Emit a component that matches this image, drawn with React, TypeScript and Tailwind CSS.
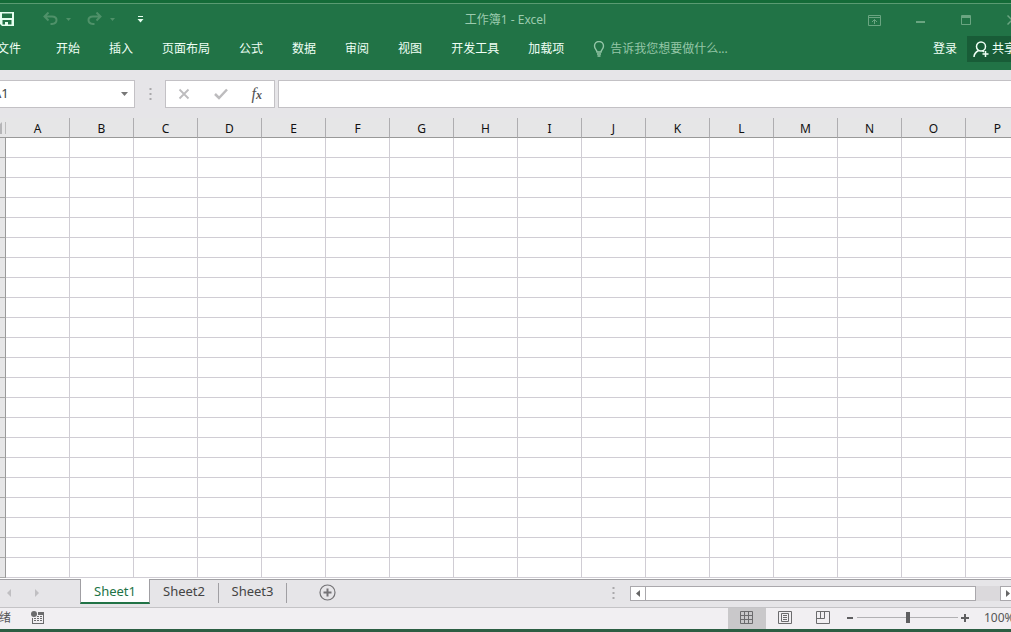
import { useState, type ReactNode } from "react";

const menus = ["开始", "插入", "页面布局", "公式", "数据", "审阅", "视图", "开发工具", "加载项"];
const columns = "ABCDEFGHIJKLMNOP".split("");
const rows = Array.from({ length: 22 }, (_, i) => i + 1);
const sheets = ["Sheet1", "Sheet2", "Sheet3"];

function WindowButton({ label, children }: { label: string; children: ReactNode }) {
  return (
    <button aria-label={label} className="flex h-8 w-[46px] items-center justify-center text-[#6aa581]">
      {children}
    </button>
  );
}

function Grip() {
  return (
    <svg width="3" height="12" viewBox="0 0 3 12" fill="#aaa9ab" aria-hidden="true" className="shrink-0">
      <path d="M0.5 0h2v2h-2zM0.5 5h2v2h-2zM0.5 10h2v2h-2z" />
    </svg>
  );
}

function TitleBar() {
  return (
    <div className="grid h-8 grid-cols-[1fr_auto_1fr] items-center">
      <div className="flex items-center pb-[2px] pl-6">
        <button aria-label="保存" className="w-[15px] text-[#e6fff0]">
          <svg width="15" height="14" viewBox="0 0 15 14" fill="currentColor">
            <path fillRule="evenodd" d="M0 0h14v14H2l-2-2zM2 1.500v4.500h10V1.500zM2.500 8v4.500h2.500V10h3v2.500h3.500V8z" />
          </svg>
        </button>
        <button aria-label="撤消" className="ml-7 text-[#4f9169]">
          <svg width="15" height="14" viewBox="0 0 15 14" fill="none" stroke="currentColor" strokeWidth="2">
            <path d="M5.500 0.500L1.500 4.500l4 4M2 4.500h7c6 0 6 7 0 7.500H7.500" />
          </svg>
        </button>
        <button aria-label="撤消列表" className="ml-2 text-[#4f9169]">
          <svg width="5" height="3" viewBox="0 0 5 3" fill="currentColor"><path d="M0 0h5L2.500 3z" /></svg>
        </button>
        <button aria-label="恢复" className="ml-4 text-[#4f9169]">
          <svg width="15" height="14" viewBox="0 0 15 14" fill="none" stroke="currentColor" strokeWidth="2">
            <path d="M9.500 0.500l4 4-4 4M13 4.500H6C0 4.500 0 11.500 6 12h1.500" />
          </svg>
        </button>
        <button aria-label="恢复列表" className="ml-2 text-[#4f9169]">
          <svg width="5" height="3" viewBox="0 0 5 3" fill="currentColor"><path d="M0 0h5L2.500 3z" /></svg>
        </button>
        <button aria-label="自定义快速访问工具栏" className="ml-[22px] text-[#e6fff0]">
          <svg width="7" height="7" viewBox="0 0 7 7" fill="currentColor">
            <path d="M1 0h5v1H1zM0.500 3h6L3.500 6.500z" />
          </svg>
        </button>
      </div>
      <h1 className="text-xs text-[#9bcbae]">工作簿1 - Excel</h1>
      <div className="flex justify-end">
        <WindowButton label="功能区显示选项">
          <svg width="13" height="11" viewBox="0 0 13 11" fill="none" stroke="currentColor">
            <path d="M0.500 0.500h12v10H0.500zM0.500 2.500h12M6.500 9V4.500M4 7l2.500-2.500L9 7" />
          </svg>
        </WindowButton>
        <WindowButton label="最小化">
          <svg width="9" height="6" viewBox="0 0 9 6" fill="currentColor"><path d="M0 4h9v2H0z" /></svg>
        </WindowButton>
        <WindowButton label="最大化">
          <svg width="10" height="10" viewBox="0 0 10 10" fill="none" stroke="currentColor">
            <path d="M0.500 0.500h9v9h-9zM0 1.500h10M0 2.500h10" />
          </svg>
        </WindowButton>
        <WindowButton label="关闭">
          <svg width="10" height="10" viewBox="0 0 10 10" fill="none" stroke="currentColor" strokeWidth="1.500">
            <path d="M0.500 0.500l9 9M9.500 0.500l-9 9" />
          </svg>
        </WindowButton>
      </div>
    </div>
  );
}

function MenuBar() {
  return (
    <nav className="flex h-[26px] items-center text-xs whitespace-nowrap text-[#effff5]">
      <button className="mr-[35px] ml-[21px]">文件</button>
      <div className="flex gap-[29px]">
        {menus.map((m) => (
          <button key={m}>{m}</button>
        ))}
        <label className="flex items-center text-[#94c6a7]">
          <svg width="12" height="16" viewBox="0 0 12 16" fill="none" stroke="currentColor" strokeWidth="1.400" className="mr-[5px]">
            <path d="M4 11C4 9 1.500 8 1.500 5a4.500 4.500 0 0 1 9 0c0 3-2.500 4-2.500 6zM4 13h4M4.500 15h3" />
          </svg>
          <input
            aria-label="操作说明搜索"
            placeholder="告诉我您想要做什么..."
            className="w-40 bg-transparent outline-none placeholder:text-[#94c6a7]"
          />
        </label>
      </div>
      <button className="ml-auto">登录</button>
      <button className="ml-[10px] flex h-[26px] w-[68px] items-center bg-[#185c37] pl-[6px]">
        <svg width="17" height="17" viewBox="0 0 17 17" fill="none" stroke="currentColor" strokeWidth="1.500" className="mr-[2px] shrink-0">
          <circle cx="8" cy="5.500" r="4.500" />
          <path d="M1 16c0-3.500 2-5 4.500-6.500M9.500 9.800l1.500 1M12.500 10v6M9.500 13h6" />
        </svg>
        共享
      </button>
    </nav>
  );
}

function FormulaBar() {
  return (
    <div className="flex h-[38px] items-start bg-[#e6e5e8] text-xs text-[#444]">
      <div className="flex h-7 w-[159px] shrink-0 items-center border border-[#c3c1c5] bg-white">
        <input aria-label="名称框" defaultValue="A1" className="w-full min-w-0 bg-transparent pl-4 text-[13px] outline-none" />
        <button aria-label="名称列表" className="mr-[5px] shrink-0 text-[#777]">
          <svg width="9" height="5" viewBox="0 0 9 5" fill="currentColor"><path d="M1 0h7L4.500 4z" /></svg>
        </button>
      </div>
      <div className="flex h-7 w-[30px] shrink-0 items-center justify-center">
        <Grip />
      </div>
      <div className="flex h-7 w-[110px] shrink-0 items-center justify-around border border-[#c3c1c5] bg-white">
        <button aria-label="取消">
          <svg width="12" height="12" viewBox="0 0 12 12" fill="none" stroke="#bdbcbe" strokeWidth="1.800"><path d="M1.500 1.500l9 9M10.500 1.500l-9 9" /></svg>
        </button>
        <button aria-label="输入">
          <svg width="14" height="12" viewBox="0 0 14 12" fill="none" stroke="#bdbcbe" strokeWidth="2.500"><path d="M1 6l4 4L13 1.500" /></svg>
        </button>
        <button aria-label="插入函数" className="flex items-baseline font-['Liberation_Serif',serif] text-base leading-5 text-[#555] italic">
          f<span className="text-xs font-bold">x</span>
        </button>
      </div>
      <input aria-label="编辑栏" className="ml-[3px] h-7 min-w-0 flex-1 border border-[#c3c1c5] bg-white px-2 outline-none" />
    </div>
  );
}

function Grid() {
  return (
    <main className="flex-1 overflow-hidden bg-white pb-px">
      <table className="w-max table-fixed border-separate border-spacing-0 font-['Noto_Sans',sans-serif] text-xs leading-4">
        <thead>
          <tr className="bg-[#e6e6e7]">
            <th className="h-5 w-[30px] border-b border-[#999] p-0">
              <button aria-label="全选" className="flex w-full justify-end border-r border-[#bbb] pr-[3px]">
                <svg width="12" height="12" viewBox="0 0 12 12" fill="#b5b5b7"><path d="M12 0v12H0z" /></svg>
              </button>
            </th>
            {columns.map((c) => (
              <th key={c} className="h-5 w-16 border-r border-b border-r-[#aeadb0] border-b-[#999] p-0 font-normal text-[#111]">
                <div className="w-[63px] pt-[3px]">{c}</div>
              </th>
            ))}
          </tr>
        </thead>
        <tbody>
          {rows.map((r) => (
            <tr key={r}>
              <th
                scope="row"
                aria-label={`${r}`}
                className="h-5 border-r border-b border-r-[#999] border-b-[#aaa] bg-[#e6e6e7] p-0"
              />
              {columns.map((c) => (
                <td key={c} className="h-5 border-r border-b border-[#d0cdd4] p-0" />
              ))}
            </tr>
          ))}
        </tbody>
      </table>
    </main>
  );
}

function SheetBar({ active, onSelect }: { active: string; onSelect: (s: string) => void }) {
  return (
    <div className="flex h-7 items-start border-t border-[#a09fa3] bg-[#e6e5e8]">
      <div className="flex h-[26px] w-[104px] shrink-0 items-center gap-6 pl-[31px] text-[#c0bfc2]">
        <button aria-label="上一个工作表">
          <svg width="4" height="8" viewBox="0 0 4 8" fill="currentColor"><path d="M4 0v8L0 4z" /></svg>
        </button>
        <button aria-label="下一个工作表">
          <svg width="4" height="8" viewBox="0 0 4 8" fill="currentColor"><path d="M0 0v8l4-4z" /></svg>
        </button>
      </div>
      <div role="tablist" className="flex text-[13px] leading-[22px] text-[#444]">
        {sheets.map((s) => (
          <button
            key={s}
            role="tab"
            aria-selected={s === active}
            onClick={() => onSelect(s)}
            className={
              s === active
                ? "-mt-px h-[25px] w-[70px] border-x border-b-2 border-x-[#a09fa3] border-b-[#217346] bg-white text-[#217346]"
                : "mt-[3px] flex h-5 w-[69px] items-center justify-center border-r border-[#a09fa3] pb-1 last:w-[68px]"
            }
          >
            {s}
          </button>
        ))}
      </div>
      <button aria-label="新工作表" className="mt-1 ml-8 text-[#747376]">
        <svg width="17" height="17" viewBox="0 0 17 17" fill="none" stroke="currentColor">
          <circle cx="8.500" cy="8.500" r="7.500" strokeWidth="1.200" />
          <path d="M4.500 8.500h8M8.500 4.500v8" strokeWidth="2" />
        </svg>
      </button>
      <div className="mr-[15px] ml-auto flex h-[26px] items-center">
        <Grip />
      </div>
      <div className="mt-[6px] mr-5 flex h-[15px] w-[385px] shrink-0 bg-[#dbd9dc] text-[#666]">
        <button aria-label="向左滚动" className="flex w-[15px] items-center justify-center border border-r-0 border-[#aaa8ac] bg-white">
          <svg width="4" height="7" viewBox="0 0 4 7" fill="currentColor"><path d="M4 0v7L0 3.500z" /></svg>
        </button>
        <div className="w-[331px] border border-[#aaa8ac] bg-white" />
        <button aria-label="向右滚动" className="ml-auto flex w-[15px] items-center justify-center border border-[#aaa8ac] bg-white">
          <svg width="4" height="7" viewBox="0 0 4 7" fill="currentColor"><path d="M0 0v7l4-3.500z" /></svg>
        </button>
      </div>
    </div>
  );
}

function StatusBar() {
  const [zoom, setZoom] = useState(100);
  return (
    <footer className="flex h-[22px] items-center border-t border-[#c4c3c6] bg-[#f1eff2] text-xs text-[#555]">
      <span className="ml-[11px] pb-[2px]">就绪</span>
      <button aria-label="录制宏" className="ml-5 pb-[2px]">
        <svg width="14" height="13" viewBox="0 0 14 13" fill="#6b6b6d">
          <circle cx="3" cy="3" r="3" />
          <path d="M7 1h6v3H7zM12 4h1v9H12zM1 7h1v6H1zM1 12h12v1H1zM3 7h2v1H3zM6 5h2v1H6zM9 5h2v1H9zM6 7h2v1H6zM9 7h2v1H9zM3 9h2v1H3zM6 9h2v1H6zM9 9h2v1H9z" />
        </svg>
      </button>
      <div className="ml-auto flex self-stretch">
        <button aria-label="普通" className="flex w-[38px] items-center justify-center bg-[#c9c8ca] pr-[2px] pb-[2px]">
          <svg width="13" height="13" viewBox="0 0 13 13" fill="none" stroke="#6b6b6d">
            <path d="M0.500 0.500h12v12H0.500zM0.500 4.500h12M0.500 8.500h12M4.500 0.500v12M8.500 0.500v12" />
          </svg>
        </button>
        <button aria-label="页面布局视图" className="flex w-[38px] items-center justify-center pb-[2px]">
          <svg width="14" height="13" viewBox="0 0 14 13" fill="none" stroke="#6b6b6d">
            <path d="M0.500 0.500h13v12H0.500zM3.500 2.500h7v8h-7zM5 4.500h4M5 6.500h4M5 8.500h4" />
          </svg>
        </button>
        <button aria-label="分页预览" className="flex w-[38px] items-center justify-center pb-[2px]">
          <svg width="14" height="13" viewBox="0 0 14 13" fill="none" stroke="#6b6b6d">
            <path d="M0.500 0.500h13v12H0.500zM0.500 7.500h8M4.500 0.500v7M8.500 0.500v7" />
          </svg>
        </button>
      </div>
      <div className="flex items-center pb-[2px]">
        <button aria-label="缩小" className="ml-1" onClick={() => setZoom(Math.max(10, zoom - 10))}>
          <svg width="8" height="8" viewBox="0 0 8 8" fill="#5f5f61"><path d="M1 3h6v2H1z" /></svg>
        </button>
        <input
          type="range"
          aria-label="显示比例"
          min={10}
          max={190}
          value={zoom}
          onChange={(e) => setZoom(Number(e.target.value))}
          className="mx-[3px] h-3 w-[101px] appearance-none bg-transparent [&::-webkit-slider-runnable-track]:h-px [&::-webkit-slider-runnable-track]:bg-[#b2b1b4] [&::-webkit-slider-thumb]:-mt-[5px] [&::-webkit-slider-thumb]:h-[11px] [&::-webkit-slider-thumb]:w-1 [&::-webkit-slider-thumb]:appearance-none [&::-webkit-slider-thumb]:bg-[#5f5f61]"
        />
        <button aria-label="放大" onClick={() => setZoom(Math.min(190, zoom + 10))}>
          <svg width="8" height="8" viewBox="0 0 8 8" fill="#5f5f61"><path d="M0 3h3V0h2v3h3v2H5v3H3V5H0z" /></svg>
        </button>
        <span className="ml-[15px] w-[51px]">{zoom}%</span>
      </div>
    </footer>
  );
}

export default function App() {
  const [sheet, setSheet] = useState("Sheet1");
  return (
    <div className="overflow-hidden font-['Noto_Sans','Noto_Sans_CJK_SC',sans-serif]">
      <div className="-mx-6 flex min-h-screen flex-col bg-[#e6e5e8]">
        <header className="border-t-[3px] border-[#146b38] bg-[#217346]">
          <div className="border-t border-[#5a9b72] pb-2">
            <TitleBar />
            <MenuBar />
          </div>
        </header>
        <div className="pt-[10px]">
          <FormulaBar />
        </div>
        <Grid />
        <SheetBar active={sheet} onSelect={setSheet} />
        <StatusBar />
        <div className="h-[3px] bg-[#2c5e43]" />
      </div>
    </div>
  );
}
